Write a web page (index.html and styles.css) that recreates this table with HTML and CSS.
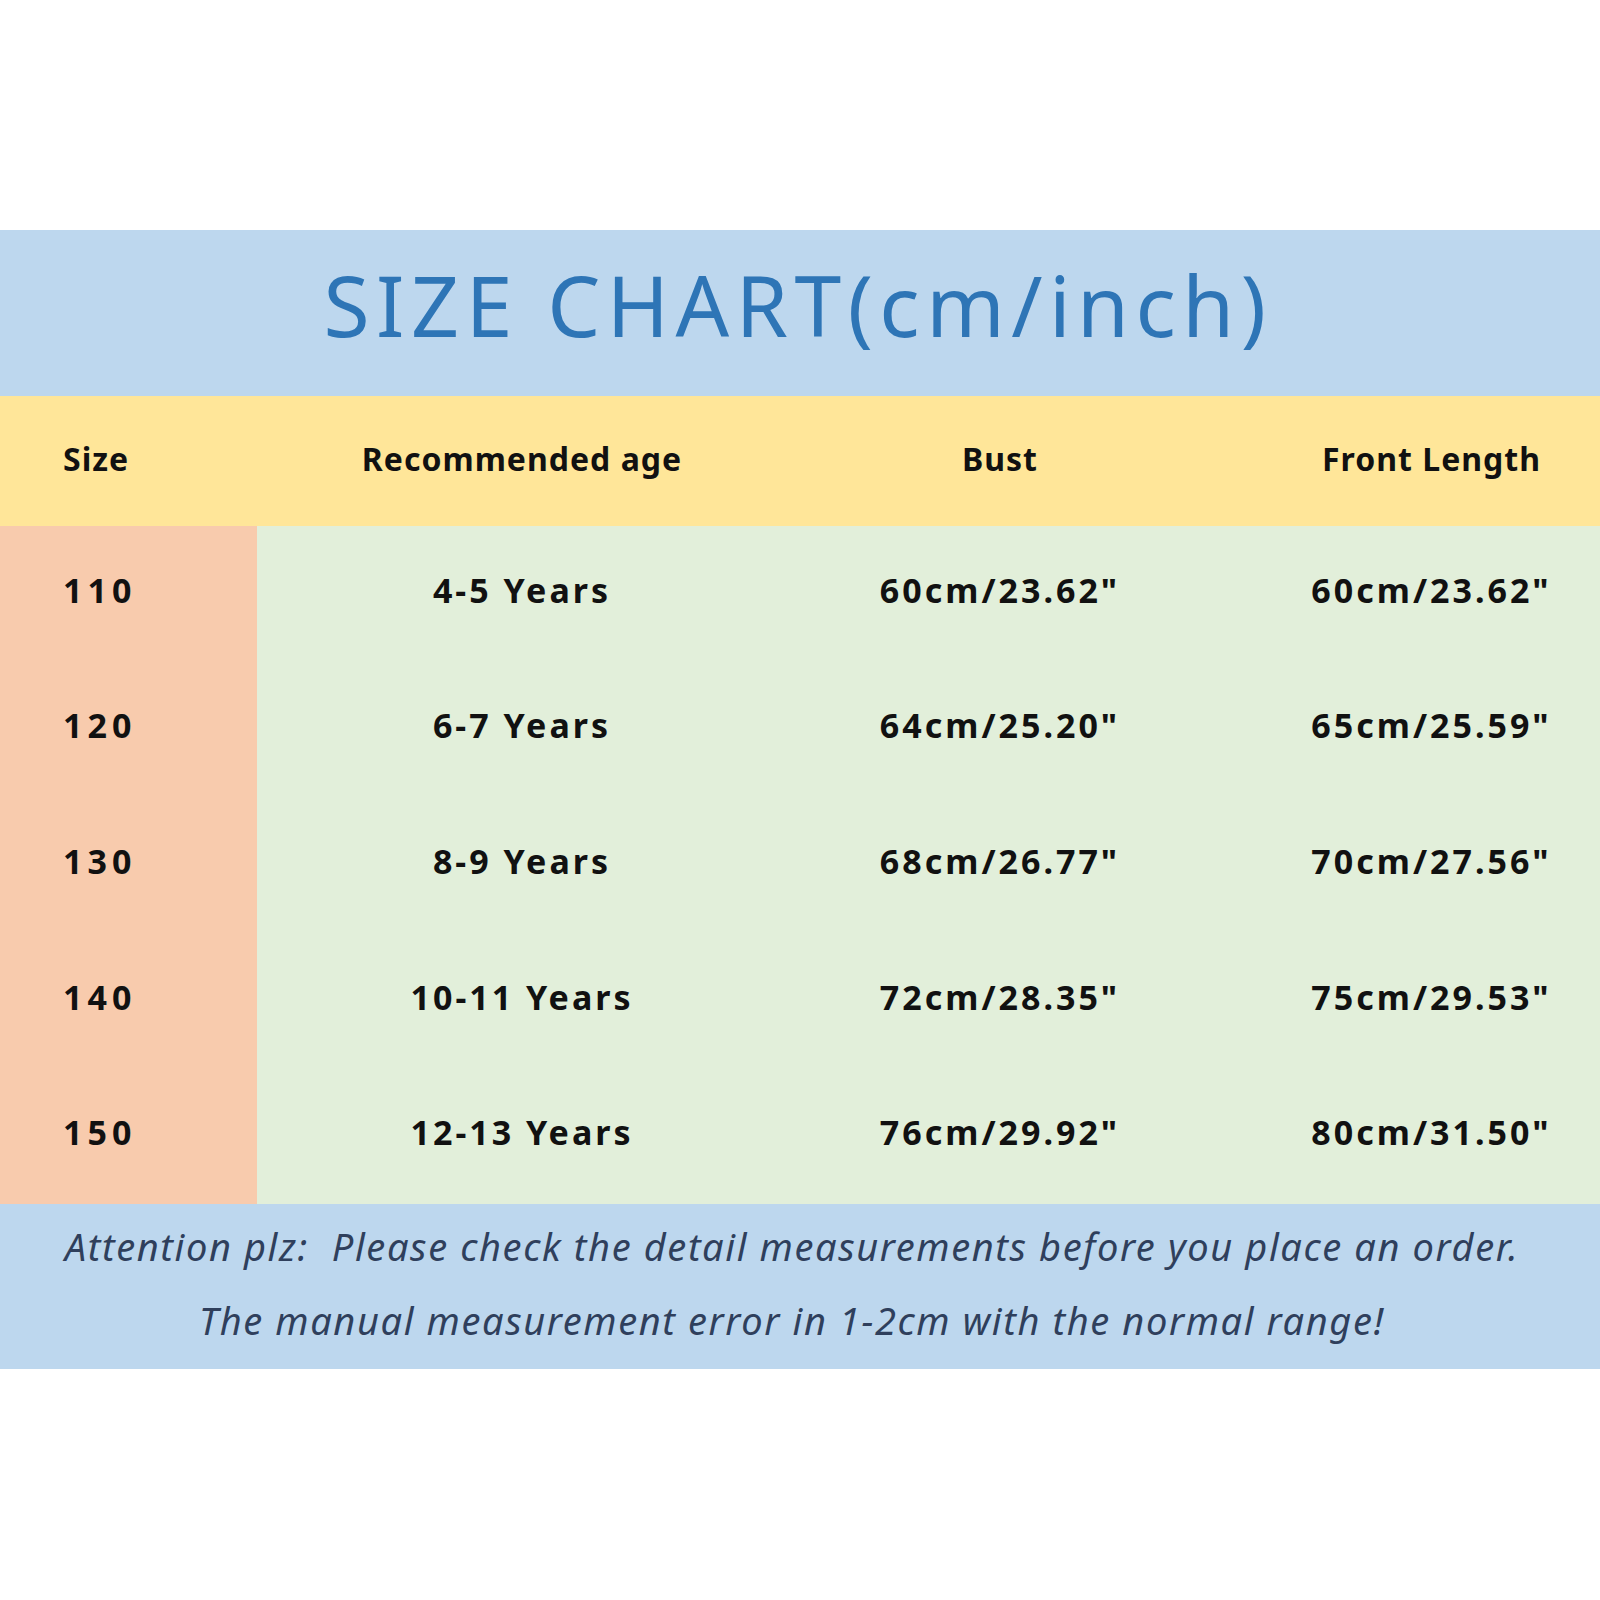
FILE: index.html
```html
<!DOCTYPE html>
<html>
<head>
<meta charset="utf-8">
<link rel="stylesheet" href="styles.css">
</head>
<body>
<div class="page">
  <div class="title-band"><h1 class="title">SIZE CHART(cm/inch)</h1></div>
  <div class="chart">
    <div class="cell head c1">Size</div>
    <div class="cell head c2">Recommended age</div>
    <div class="cell head c3">Bust</div>
    <div class="cell head c4">Front Length</div>

    <div class="cell size c1">110</div>
    <div class="cell body c2">4-5 Years</div>
    <div class="cell body c3">60cm/23.62"</div>
    <div class="cell body c4">60cm/23.62"</div>

    <div class="cell size c1">120</div>
    <div class="cell body c2">6-7 Years</div>
    <div class="cell body c3">64cm/25.20"</div>
    <div class="cell body c4">65cm/25.59"</div>

    <div class="cell size c1">130</div>
    <div class="cell body c2">8-9 Years</div>
    <div class="cell body c3">68cm/26.77"</div>
    <div class="cell body c4">70cm/27.56"</div>

    <div class="cell size c1">140</div>
    <div class="cell body c2">10-11 Years</div>
    <div class="cell body c3">72cm/28.35"</div>
    <div class="cell body c4">75cm/29.53"</div>

    <div class="cell size c1">150</div>
    <div class="cell body c2">12-13 Years</div>
    <div class="cell body c3">76cm/29.92"</div>
    <div class="cell body c4">80cm/31.50"</div>
  </div>
  <div class="note">
    <p class="note-line">Attention plz:&nbsp; Please check the detail measurements before you place an order.</p>
    <p class="note-line">The manual measurement error in 1-2cm with the normal range!</p>
  </div>
</div>
</body>
</html>
```
FILE: styles.css
```css
html, body {
  margin: 0;
  padding: 0;
  background: #ffffff;
}
.page {
  width: 1600px;
  height: 1600px;
  padding-top: 230px;
  box-sizing: border-box;
  font-family: "Comic Sans MS", "Noto Sans", "DejaVu Sans", sans-serif;
}
.title-band {
  height: 166px;
  background: #bdd7ee;
  display: flex;
  align-items: center;
  justify-content: center;
}
.title {
  margin: 0 4px 16px 0;
  font-weight: 400;
  font-size: 84px;
  line-height: 100px;
  color: #2e75b6;
  letter-spacing: 6.5px;
}
.chart {
  display: grid;
  grid-template-columns: 257px 530px 426px 387px;
  grid-template-rows: 130px repeat(5, 135.6px);
}
.cell {
  display: flex;
  align-items: center;
  justify-content: center;
  color: #111111;
  font-weight: 700;
  font-size: 34px;
  letter-spacing: 3px;
  padding-bottom: 8px;
  box-sizing: border-box;
}
.head {
  background: #ffe699;
  font-size: 32px;
  letter-spacing: 1px;
  padding-bottom: 6px;
}
.head.c1, .size.c1 {
  justify-content: flex-start;
  padding-left: 63px;
}
.size {
  background: #f8cbad;
  letter-spacing: 5px;
}
.body {
  background: #e2efda;
}
.c4 {
  padding-left: 50px;
}
.note {
  height: 165px;
  background: #bdd7ee;
  display: flex;
  flex-direction: column;
  align-items: center;
  justify-content: center;
  gap: 22px;
  padding-right: 16px;
  padding-bottom: 6px;
  box-sizing: border-box;
}
.note-line {
  margin: 0;
  font-size: 38px;
  font-style: italic;
  color: #2f3f5c;
  line-height: 52px;
  letter-spacing: 1.6px;
}
```
